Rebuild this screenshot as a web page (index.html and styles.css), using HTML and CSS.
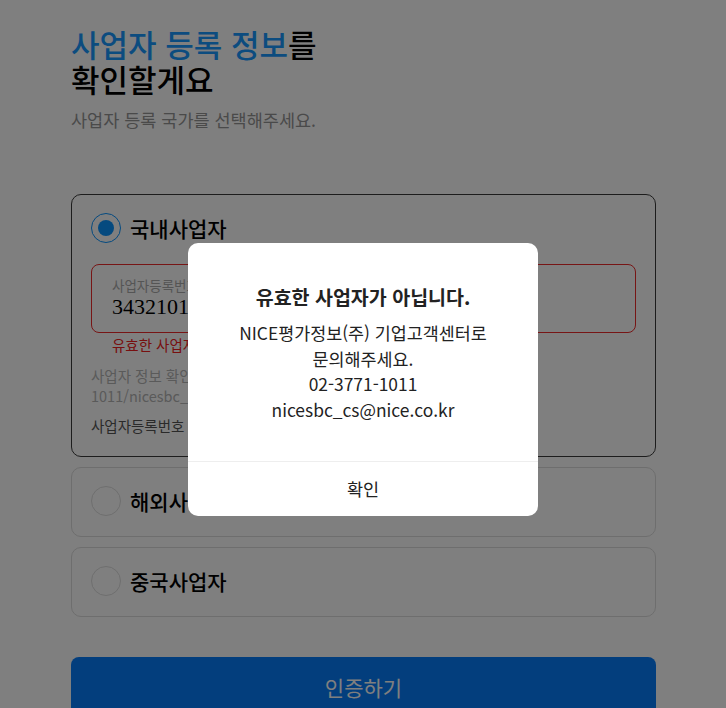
FILE: index.html
```html
<!DOCTYPE html>
<html lang="ko">
<head>
    <meta charset="UTF-8">
    <meta name="viewport" content="width=device-width, initial-scale=1.0">
    <title>사업자 등록 정보 확인</title>
    <link rel="stylesheet" href="styles.css">
</head>
<body>
    <div id="page">
        <h1 id="title"><span class="blue">사업자 등록 정보</span>를<br>확인할게요</h1>
        <p id="subtitle">사업자 등록 국가를 선택해주세요.</p>

        <div class="biz-card selected">
            <div class="biz-head">
                <span class="radio on"></span>
                <span class="biz-name">국내사업자</span>
            </div>
            <div class="field error">
                <span class="field-label">사업자등록번호</span>
                <span class="field-value">3432101011</span>
            </div>
            <p class="error-text">유효한 사업자등록번호가 아닙니다.</p>
            <p class="info-text">사업자 정보 확인이 어려우신 경우 NICE평가정보(주) 고객센터(02-3771-1011/nicesbc_cs@nice.co.kr)로 문의해주세요.</p>
            <p class="info-link">사업자등록번호 조회하기 &gt;</p>
        </div>

        <div class="biz-card">
            <div class="biz-head">
                <span class="radio"></span>
                <span class="biz-name">해외사업자</span>
            </div>
        </div>

        <div class="biz-card">
            <div class="biz-head">
                <span class="radio"></span>
                <span class="biz-name">중국사업자</span>
            </div>
        </div>

        <button id="submit">인증하기</button>
    </div>

    <div id="dim"></div>
    <div id="alert">
        <div id="alert-body">
            <p id="alert-title">유효한 사업자가 아닙니다.</p>
            <div id="alert-text">
                <span class="alert-line">NICE평가정보(주) 기업고객센터로</span>
                <span class="alert-line">문의해주세요.</span>
                <span class="alert-line">02-3771-1011</span>
                <span class="alert-line">nicesbc_cs@nice.co.kr</span>
            </div>
        </div>
        <div id="alert-foot">확인</div>
    </div>
</body>
</html>
```

FILE: styles.css
```css
body
{
    margin: 0;
    background: #fff;
    font-family: "Noto Sans CJK KR", "Noto Sans", sans-serif;
    color: #111;
}

#page
{
    padding: 26px 70px 0 71px;
}

#title
{
    margin: 0;
    font-size: 31px;
    line-height: 35px;
    font-weight: 500;
    color: #000;
}

.blue
{
    color: #1898ff;
}

#subtitle
{
    margin: 12px 0 0 0;
    font-size: 17.5px;
    line-height: 24px;
    color: #949494;
}

.biz-card
{
    margin-top: 10px;
    border: 1px solid #dcdcdc;
    border-radius: 10px;
    padding: 17px 19px 19px 19px;
}

.biz-card.selected
{
    margin-top: 62px;
    border-color: #3a3a3a;
    padding-bottom: 20px;
}

.biz-head
{
    display: flex;
    align-items: center;
    gap: 9px;
    height: 32px;
}

.radio
{
    width: 28px;
    height: 28px;
    border: 1px solid #ddd;
    border-radius: 50%;
    display: flex;
    align-items: center;
    justify-content: center;
}

.radio.on
{
    border-color: #0b94ff;
}

.radio.on::after
{
    content: "";
    width: 16px;
    height: 16px;
    border-radius: 50%;
    background: #0b94ff;
}

.biz-name
{
    font-size: 21px;
    font-weight: 500;
    color: #000;
}

.field
{
    margin-top: 20px;
    height: 69px;
    border: 1px solid #ddd;
    border-radius: 8px;
    padding: 10px 20px 0 20px;
    box-sizing: border-box;
    display: flex;
    flex-direction: column;
}

.field.error
{
    border-color: #ee2a2a;
}

.field-label
{
    font-size: 13.5px;
    line-height: 20px;
    color: #aaa;
}

.field-value
{
    font-family: "Liberation Serif", serif;
    font-size: 22px;
    line-height: 24px;
    color: #000;
}

.error-text
{
    margin: 2px 0 0 21px;
    font-size: 14.5px;
    line-height: 20px;
    color: #f02020;
}

.info-text
{
    margin: 11px 0 0 0;
    font-size: 14.5px;
    line-height: 20px;
    color: #b4b4b4;
}

.info-link
{
    margin: 10px 0 0 0;
    font-size: 14.5px;
    line-height: 20px;
    color: #555;
}

#submit
{
    display: block;
    width: 100%;
    margin-top: 40px;
    height: 60px;
    border: none;
    border-radius: 8px;
    background: #067cfa;
    color: #fff;
    font-family: inherit;
    font-size: 21px;
}

#dim
{
    position: fixed;
    inset: 0;
    background: rgba(0, 0, 0, 0.5);
}

#alert
{
    position: fixed;
    left: 188px;
    top: 243px;
    width: 350px;
    background: #fff;
    border-radius: 10px;
    text-align: center;
    color: #222;
}

#alert-body
{
    padding: 40px 20px 39px 20px;
}

#alert-title
{
    margin: 0;
    font-size: 19.5px;
    line-height: 28px;
    font-weight: 700;
}

#alert-text
{
    margin-top: 9px;
    font-size: 17.4px;
    line-height: 25.5px;
}

.alert-line
{
    display: block;
}

#alert-foot
{
    border-top: 1px solid #eee;
    height: 54px;
    line-height: 54px;
    font-size: 17.5px;
}
```
